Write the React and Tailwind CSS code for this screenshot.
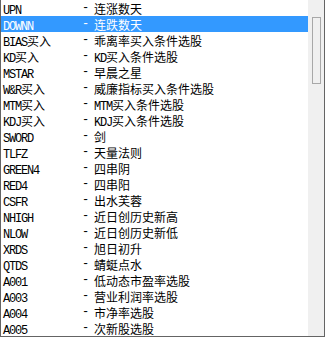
const rows = [
  ["UPN", "连涨数天"],
  ["DOWNN", "连跌数天"],
  ["BIAS买入", "乖离率买入条件选股"],
  ["KD买入", "KD买入条件选股"],
  ["MSTAR", "早晨之星"],
  ["W&R买入", "威廉指标买入条件选股"],
  ["MTM买入", "MTM买入条件选股"],
  ["KDJ买入", "KDJ买入条件选股"],
  ["SWORD", "剑"],
  ["TLFZ", "天量法则"],
  ["GREEN4", "四串阴"],
  ["RED4", "四串阳"],
  ["CSFR", "出水芙蓉"],
  ["NHIGH", "近日创历史新高"],
  ["NLOW", "近日创历史新低"],
  ["XRDS", "旭日初升"],
  ["QTDS", "蜻蜓点水"],
  ["A001", "低动态市盈率选股"],
  ["A003", "营业利润率选股"],
  ["A004", "市净率选股"],
  ["A005", "次新股选股"],
];

// split text into ascii / cjk runs so each gets its own font
function Mixed({ text }) {
  const parts = text.match(/[\x00-\x7f]+|[^\x00-\x7f]+/g) || [];
  return parts.map((p, i) =>
    /^[\x00-\x7f]/.test(p) ? (
      <span key={i} className="font-['Liberation_Mono',monospace] text-[12px] tracking-[-1.2px]">
        {p}
      </span>
    ) : (
      <span key={i} className="font-['Noto_Sans_CJK_SC',sans-serif] text-[12px]">
        {p}
      </span>
    )
  );
}

export default function App() {
  return (
    <div className="w-[325px] h-[337px] flex bg-white border-l border-r border-b border-[#646464] overflow-hidden">
      {/* list */}
      <div className="flex-1 flex flex-col">
        {rows.map(([name, desc], i) => (
          <div
            key={name}
            className={
              i === 1
                ? "h-[16px] shrink-0 flex items-center bg-[#3399ff] text-white leading-none"
                : "h-[16px] shrink-0 flex items-center text-black leading-none"
            }
          >
            <div className="w-[81px] pl-[2px] whitespace-nowrap">
              <Mixed text={name} />
            </div>
            <div className="w-[12px] font-['Liberation_Mono',monospace] text-[12px]">-</div>
            <div className="whitespace-nowrap">
              <Mixed text={desc} />
            </div>
          </div>
        ))}
      </div>

      {/* scrollbar */}
      <div className="w-[16px] bg-[#f0f0f0] flex justify-center">
        <div className="mt-[17px] w-[9px] h-[67px] bg-[#f0f0f0] border border-[#a8a8a8]"></div>
      </div>
    </div>
  );
}
